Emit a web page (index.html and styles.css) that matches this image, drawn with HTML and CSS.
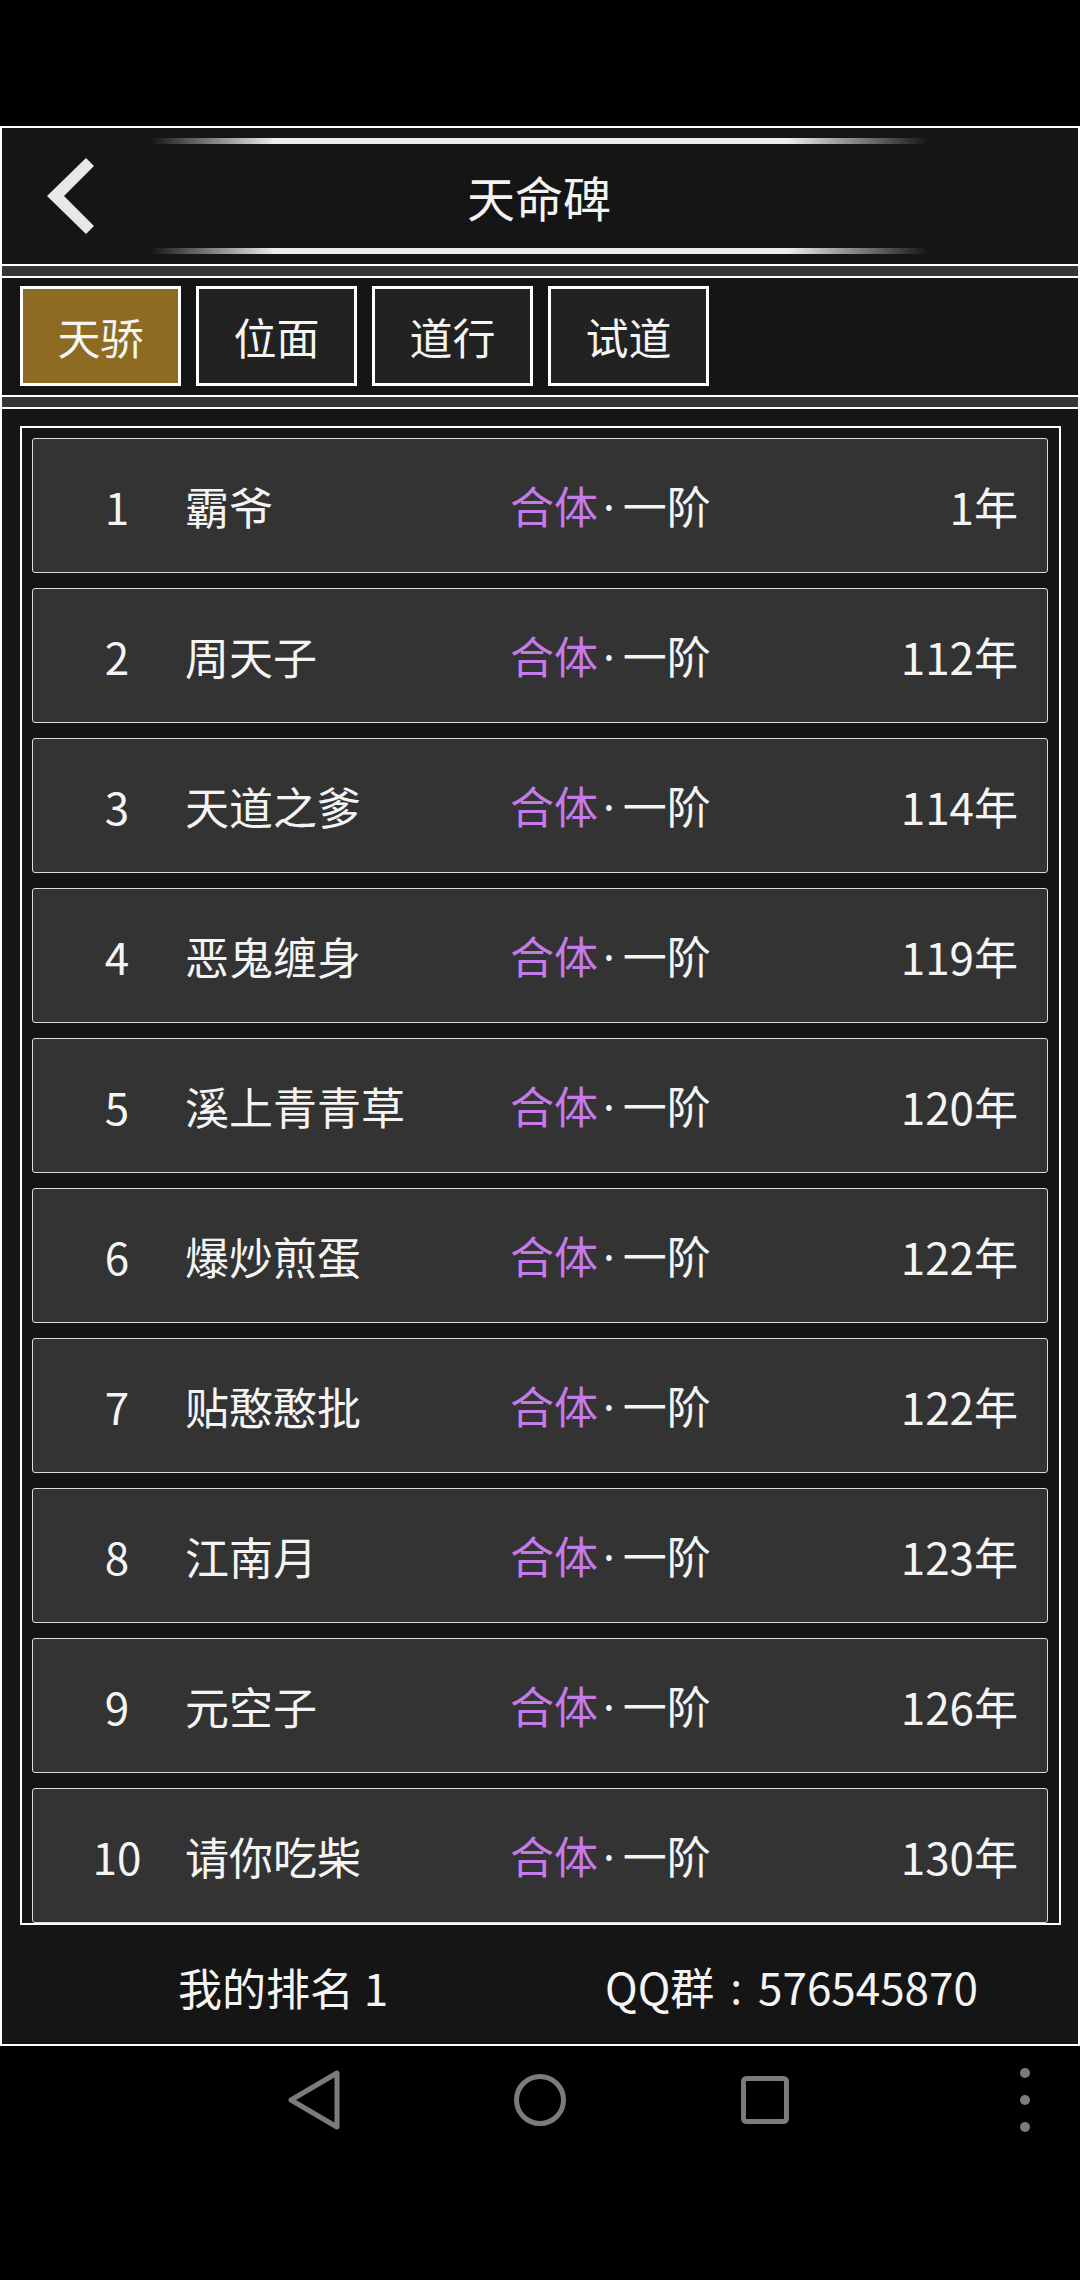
FILE: index.html
```html
<!DOCTYPE html>
<html lang="zh">

<head>
    <meta charset="UTF-8">
    <meta name="viewport" content="width=device-width, initial-scale=1.0">
    <title>天命碑</title>
    <link rel="stylesheet" href="styles.css">
</head>

<body>
    <div class="statusbar"></div>

    <div class="panel">
        <div class="header">
            <div class="back">
                <svg width="148" height="136" viewBox="0 0 148 136">
                    <polygon points="84,30 92,38 62,68 92,98 84,106 45,68" fill="#e8e8e8" />
                </svg>
            </div>
            <div class="title-wrap">
                <div class="glow-line"></div>
                <h1 class="title">天命碑</h1>
                <div class="glow-line"></div>
            </div>
        </div>

        <div class="divider"></div>

        <div class="tabs">
            <div class="tab active">天骄</div>
            <div class="tab">位面</div>
            <div class="tab">道行</div>
            <div class="tab">试道</div>
        </div>

        <div class="divider"></div>

        <div class="list-area">
            <div class="list-frame">
                <div class="row"><span class="rank">1</span><span class="name">霸爷</span><span class="realm"><em>合体</em><i>·</i>一阶</span><span class="age">1年</span></div>
                <div class="row"><span class="rank">2</span><span class="name">周天子</span><span class="realm"><em>合体</em><i>·</i>一阶</span><span class="age">112年</span></div>
                <div class="row"><span class="rank">3</span><span class="name">天道之爹</span><span class="realm"><em>合体</em><i>·</i>一阶</span><span class="age">114年</span></div>
                <div class="row"><span class="rank">4</span><span class="name">恶鬼缠身</span><span class="realm"><em>合体</em><i>·</i>一阶</span><span class="age">119年</span></div>
                <div class="row"><span class="rank">5</span><span class="name">溪上青青草</span><span class="realm"><em>合体</em><i>·</i>一阶</span><span class="age">120年</span></div>
                <div class="row"><span class="rank">6</span><span class="name">爆炒煎蛋</span><span class="realm"><em>合体</em><i>·</i>一阶</span><span class="age">122年</span></div>
                <div class="row"><span class="rank">7</span><span class="name">贴憨憨批</span><span class="realm"><em>合体</em><i>·</i>一阶</span><span class="age">122年</span></div>
                <div class="row"><span class="rank">8</span><span class="name">江南月</span><span class="realm"><em>合体</em><i>·</i>一阶</span><span class="age">123年</span></div>
                <div class="row"><span class="rank">9</span><span class="name">元空子</span><span class="realm"><em>合体</em><i>·</i>一阶</span><span class="age">126年</span></div>
                <div class="row"><span class="rank">10</span><span class="name">请你吃柴</span><span class="realm"><em>合体</em><i>·</i>一阶</span><span class="age">130年</span></div>
            </div>
        </div>

        <div class="footer">
            <span class="my-rank">我的排名 1</span>
            <span class="qq">QQ群<i>:</i>576545870</span>
        </div>
    </div>

    <div class="navbar">
        <div class="nav-btn nav-back">
            <svg width="100" height="60" viewBox="0 0 100 60">
                <polygon points="27,30 73,3 73,57" fill="none" stroke="#7b7b7b" stroke-width="5" stroke-linejoin="round" />
            </svg>
        </div>
        <div class="nav-btn nav-home">
            <svg width="100" height="60" viewBox="0 0 100 60">
                <circle cx="50" cy="30" r="23.5" fill="none" stroke="#7b7b7b" stroke-width="5" />
            </svg>
        </div>
        <div class="nav-btn nav-recent">
            <svg width="100" height="60" viewBox="0 0 100 60">
                <rect x="28.5" y="8.5" width="43" height="43" rx="3" fill="none" stroke="#7b7b7b" stroke-width="5" />
            </svg>
        </div>
        <div class="nav-btn nav-more">
            <svg width="100" height="60" viewBox="0 0 100 60">
                <circle cx="50" cy="3" r="5" fill="#7b7b7b" />
                <circle cx="50" cy="30" r="5" fill="#7b7b7b" />
                <circle cx="50" cy="57" r="5" fill="#7b7b7b" />
            </svg>
        </div>
    </div>
</body>

</html>
```

FILE: styles.css
```css
* {
    box-sizing: border-box;
}

body {
    margin: 0;
    width: 1080px;
    height: 2280px;
    background-color: #000;
    color: #f2f2f2;
    font-family: "Noto Sans CJK SC", "Noto Sans", sans-serif;
    overflow: hidden;
}

.statusbar {
    height: 126px;
}

/* Main panel */
.panel {
    width: 1080px;
    height: 1920px;
    border: 2px solid #fff;
    background-color: #151515;
}

.header {
    display: flex;
    height: 136px;
}

.back {
    width: 148px;
    height: 136px;
}

.back svg {
    display: block;
}

.title-wrap {
    width: 778px;
    padding: 9px 0;
    display: flex;
    flex-direction: column;
}

.glow-line {
    height: 8px;
    padding: 1px 0;
    background-clip: content-box;
    background-image: linear-gradient(to right, rgba(236, 236, 236, 0) 0%, #ececec 16%, #ececec 82%, rgba(236, 236, 236, 0) 100%);
    border-radius: 4px;
    filter: blur(0.7px);
}

.title {
    margin: 0;
    height: 102px;
    display: flex;
    justify-content: center;
    align-items: center;
    font-size: 48px;
    font-weight: 400;
    line-height: 1;
    color: #f2f2f2;
}

.divider {
    height: 14px;
    border-top: 2px solid #fff;
    border-bottom: 2px solid #fff;
    background-color: #363636;
}

/* Tabs */
.tabs {
    height: 117px;
    padding: 8px 0 0 18px;
    display: flex;
    gap: 15px;
}

.tab {
    width: 161px;
    height: 100px;
    border: 3px solid #fff;
    background-color: #222;
    display: flex;
    justify-content: center;
    align-items: center;
    font-size: 43px;
    line-height: 1;
    color: #f4f4f4;
}

.tab.active {
    background-color: #8d6b22;
}

/* Ranking list */
.list-area {
    padding: 17px 0 0 18px;
}

.list-frame {
    width: 1041px;
    height: 1499px;
    border: 2px solid #fff;
    padding: 10px 11px 0 10px;
    overflow: hidden;
}

.row {
    height: 135px;
    margin-bottom: 15px;
    border: 1px solid #dcdcdc;
    border-radius: 3px;
    background-color: #333;
    display: flex;
    align-items: center;
    font-size: 44px;
    line-height: 1;
    color: #f4f4f4;
}

.rank {
    width: 100px;
    margin-left: 34px;
    text-align: center;
}

.name {
    width: 325px;
    margin-left: 18px;
}

.realm {
    flex: 1;
}

.realm em {
    font-style: normal;
    color: #c47be8;
}

.realm i {
    font-style: normal;
    font-family: "Noto Sans", sans-serif;
    margin: 0 8px 0 5px;
}

.age {
    padding-right: 29px;
    text-align: right;
}

.footer {
    height: 119px;
    padding: 4px 0 0 176px;
    display: flex;
    align-items: center;
    font-size: 44px;
    line-height: 1;
    color: #f4f4f4;
}

.my-rank {
    width: 427px;
}

.qq i {
    font-style: normal;
    font-family: "Noto Sans", sans-serif;
    margin: 0 16px;
}

/* System nav bar */
.navbar {
    height: 234px;
    padding-top: 24px;
    display: flex;
    align-items: flex-start;
}

.nav-btn {
    width: 100px;
    height: 60px;
}

.nav-btn svg {
    display: block;
    overflow: visible;
}

.nav-back {
    margin-left: 264px;
}

.nav-home {
    margin-left: 126px;
}

.nav-recent {
    margin-left: 125px;
}

.nav-more {
    margin-left: 160px;
}
```
